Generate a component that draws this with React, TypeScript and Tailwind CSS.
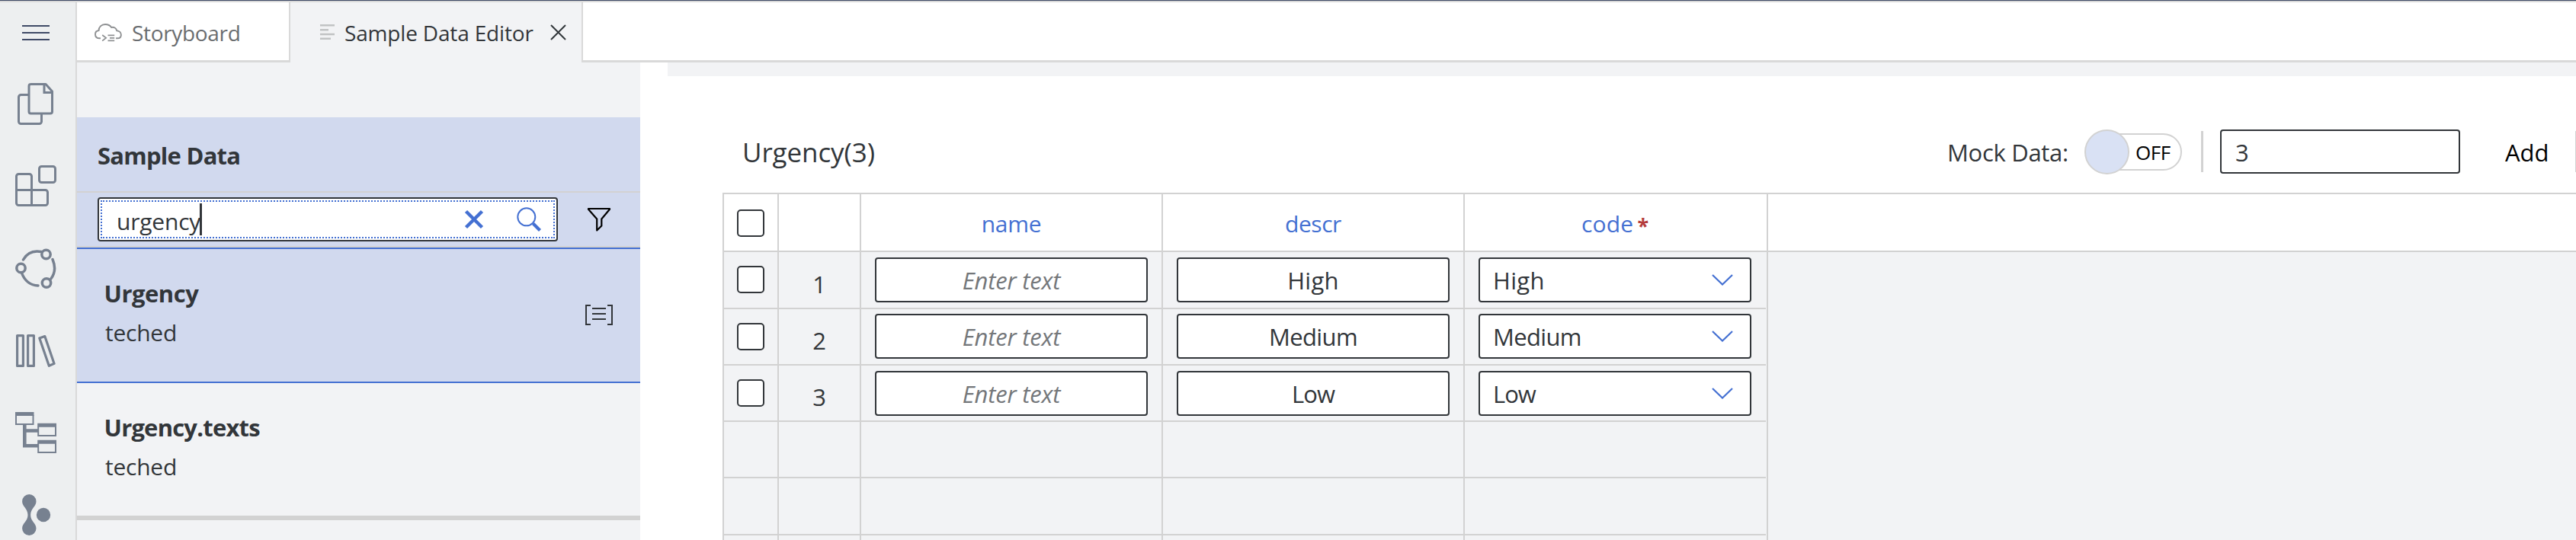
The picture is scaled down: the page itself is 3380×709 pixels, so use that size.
import type { ReactNode } from "react";

const SLATE = "#778190";
const BLUE = "#4470d2";

/* ---------- Icons ---------- */

function FilesIcon() {
  return (
    <svg width="50" height="56" viewBox="0 0 50 56" fill="none" stroke={SLATE} strokeWidth="3">
      <path d="M17.5 15.5H7.5a3 3 0 0 0-3 3v32a3 3 0 0 0 3 3h24a3 3 0 0 0 3-3V40" />
      <path d="M20 1.5h20L48.5 11v26.500a2.500 2.500 0 0 1-2.500 2.500H20.500a2.500 2.500 0 0 1-2.500-2.500V4a2.500 2.500 0 0 1 2.500-2.500" strokeLinejoin="round" />
      <path d="M38 2v10.500h10.500" />
    </svg>
  );
}

function BlocksIcon() {
  return (
    <svg width="54" height="54" viewBox="0 0 54 54" fill="none" stroke={SLATE} strokeWidth="3">
      <rect x="31.500" y="1.500" width="21" height="21" rx="3" />
      <path d="M4.500 11.500h14a3 3 0 0 1 3 3v18h18a3 3 0 0 1 3 3v14a3 3 0 0 1-3 3h-35a3 3 0 0 1-3-3v-35a3 3 0 0 1 3-3z" />
      <path d="M1.500 32.500h20v20" />
    </svg>
  );
}

function CycleIcon() {
  return (
    <svg width="54" height="54" viewBox="0 0 54 54" fill="none" stroke={SLATE} strokeWidth="3.500" strokeLinecap="round">
      <circle cx="40.500" cy="8" r="5.700" />
      <circle cx="7.500" cy="26" r="5.700" />
      <circle cx="41" cy="45.500" r="5.700" />
      <path d="M10.500 15C15 7 23 2.500 34 4.500" />
      <path d="M49 14.500c4 9.500 3.500 18.500-2.500 26" />
      <path d="M8.500 32.500C12.500 43 20 48.500 30 49" />
    </svg>
  );
}

function BooksIcon() {
  return (
    <svg width="54" height="44" viewBox="0 0 54 44" fill="none" stroke={SLATE} strokeWidth="3.200" strokeLinejoin="round">
      <rect x="3.600" y="1.600" width="7.800" height="39.800" />
      <rect x="17.600" y="1.600" width="7.800" height="39.800" />
      <path d="M32.800 5l7-2.400 12.300 35.800-6.800 2.900z" />
    </svg>
  );
}

function TreeIcon() {
  return (
    <svg width="54" height="54" viewBox="0 0 54 54" fill="none" stroke={SLATE} strokeWidth="2">
      <path d="M1 4v12h22.500V4M30.200 19v12H53V19M30.200 41v12H53V41" />
      <path d="M0 2.500h24.500M29.200 17.300H54M29.200 39.300H54" strokeWidth="5" />
      <path d="M12.300 16v28.200H30M12.300 24.500H30" strokeWidth="4.600" />
    </svg>
  );
}

function BranchIcon() {
  return (
    <svg width="38" height="54" viewBox="0 0 38 54" fill={SLATE}>
      <path d="M9.300 0a9.200 9.200 0 0 1 9.200 9.200c0 7-7.400 9.300-7.400 17.800s7.400 10.800 7.400 17.800a9.200 9.200 0 0 1-18.400 0c0-7 7.400-9.300 7.400-17.800S.1 16.200.1 9.200A9.200 9.200 0 0 1 9.300 0z" />
      <circle cx="28" cy="27" r="9.200" />
    </svg>
  );
}

function CloudIcon() {
  return (
    <svg width="36" height="24" viewBox="0 0 36 24" fill="none" stroke="#8f9193" strokeWidth="1.900">
      <path d="M8 19.300H6C3 19 1 17 1 14c0-2.800 1.700-4.600 4.600-5C5.500 4.500 9 1 14 1c4 0 6.500 1.300 8.200 4 3.300-.8 6.300.7 7 4.200 3.300.3 5.700 2.500 5.700 5.500 0 2.800-2 4.600-4.800 4.600h-2" />
      <path d="M10.200 15l5 3.800-5 3.800M17.500 15.300h8.700M20 18.800h6.200M17.500 22.300h8.700" strokeWidth="1.700" />
    </svg>
  );
}

function Chevron() {
  return (
    <svg width="28" height="15" viewBox="0 0 28 15" fill="none" stroke={BLUE} strokeWidth="2.200">
      <path d="M1 1l13 12.500L27 1" />
    </svg>
  );
}

/* ---------- Data table ---------- */

function Checkbox() {
  return <div className="size-9 shrink-0 rounded-[5px] border-2 border-[#32363a] bg-white" />;
}

function Field({ children, className = "" }: { children?: ReactNode; className?: string }) {
  return (
    <div className={`flex h-[59px] w-[358px] items-center rounded-[4px] border-2 border-[#32363a] bg-white leading-[60px] ${className}`}>
      {children}
    </div>
  );
}

type Row = {
  index: number;
  label: string;
  height: string;
  fieldPad: string;
  tracking: string;
  digit: string;
};

const rows: Row[] = [
  { index: 1, label: "High", height: "h-[75px]", fieldPad: "pt-[7px]", tracking: "tracking-[0.3px]", digit: "leading-[84px]" },
  { index: 2, label: "Medium", height: "h-[74px]", fieldPad: "pt-[6px]", tracking: "tracking-[-0.65px]", digit: "leading-[82px]" },
  { index: 3, label: "Low", height: "h-[74px]", fieldPad: "pt-[7px]", tracking: "tracking-[-1px]", digit: "leading-[82px]" },
];

function DataRow({ row }: { row: Row }) {
  return (
    <div className={`flex shrink-0 border-b-2 border-[#d2d2d2] ${row.height}`}>
      <div className="w-[72px] border-r-2 border-[#d2d2d2] pt-[18px] pl-[17px]">
        <Checkbox />
      </div>
      <div className={`w-[108px] border-r-2 border-[#d2d2d2] text-center ${row.digit}`}>{row.index}</div>
      <div className={`w-[396px] border-r-2 border-[#d2d2d2] pl-[18px] ${row.fieldPad}`}>
        <Field className="justify-center tracking-[-0.2px] text-[#74777a] italic">Enter text</Field>
      </div>
      <div className={`w-[396px] border-r-2 border-[#d2d2d2] pl-[18px] ${row.fieldPad}`}>
        <Field className={`justify-center ${row.tracking}`}>{row.label}</Field>
      </div>
      <div className={`w-[395px] pl-[18px] ${row.fieldPad}`}>
        <Field className={`justify-between pr-[22px] pl-[17px] ${row.tracking}`}>
          {row.label}
          <Chevron />
        </Field>
      </div>
    </div>
  );
}

function EmptyRow({ className }: { className: string }) {
  return (
    <div className={`flex shrink-0 border-b-2 border-[#d2d2d2] ${className}`}>
      <div className="w-[72px] border-r-2 border-[#d2d2d2]" />
      <div className="w-[108px] border-r-2 border-[#d2d2d2]" />
      <div className="w-[396px] border-r-2 border-[#d2d2d2]" />
      <div className="w-[396px] border-r-2 border-[#d2d2d2]" />
    </div>
  );
}

/* ---------- Panels ---------- */

function Sidebar() {
  return (
    <nav className="flex w-[101px] shrink-0 flex-col border-r-2 border-[#d9d9d9] bg-[#edeff0]">
      <div className="mt-[30px] ml-[29px] flex flex-col gap-[7px]">
        <span className="h-0.5 w-9 bg-[#3f4a66]" />
        <span className="h-0.5 w-9 bg-[#3f4a66]" />
        <span className="h-0.5 w-9 bg-[#3f4a66]" />
      </div>
      <div className="mt-[56px] ml-[20px]"><FilesIcon /></div>
      <div className="mt-[52px] ml-[20px]"><BlocksIcon /></div>
      <div className="mt-[55px] ml-[20px]"><CycleIcon /></div>
      <div className="mt-[59px] ml-[19px]"><BooksIcon /></div>
      <div className="mt-[58px] ml-[20px]"><TreeIcon /></div>
      <div className="mt-[54px] ml-[29px]"><BranchIcon /></div>
    </nav>
  );
}

function DataList() {
  return (
    <aside className="flex w-[739px] shrink-0 flex-col bg-[#f2f3f5] pt-[72px]">
      <h2 className="h-[99px] shrink-0 border-b-2 border-[#d2d2d2] bg-[#d1d9ee] pl-[27px] text-[31px] leading-[100px] font-bold tracking-[-0.75px]">
        Sample Data
      </h2>
      <div className="flex h-[72px] shrink-0 items-start border-b-2 border-[#d2d2d2] bg-[#d1d9ee] pt-[6px] pl-[27px]">
        <div className="h-[58px] w-[604px] rounded-[4px] border-2 border-[#32363a] bg-white p-0.5">
          <div className="flex h-[50px] w-[596px] items-center border-2 border-dotted border-[#4470d2] pl-[19px]">
            <span className="pt-[5px] text-[30px] leading-[52px] tracking-[-0.2px]">urgency</span>
            <span className="-ml-px h-[42px] w-[3px] bg-[#32363a]" />
            <svg className="ml-auto" width="26" height="26" viewBox="0 0 26 26" stroke={BLUE} strokeWidth="4.500">
              <path d="M2.500 2.500l21 21M23.500 2.500l-21 21" />
            </svg>
            <svg className="mr-[16px] ml-[43px]" width="32" height="32" viewBox="0 0 32 32" fill="none" stroke={BLUE} strokeWidth="2">
              <circle cx="12.800" cy="12.800" r="11.500" />
              <path d="M21.500 21.500l9 9" strokeWidth="4.200" />
            </svg>
          </div>
        </div>
        <svg className="mt-[13px] ml-[38px]" width="32" height="33" viewBox="0 0 32 33" fill="none" stroke="#000" strokeWidth="2.200" strokeLinejoin="round">
          <path d="M2 2h28v.800L19.300 15.500v9L13.200 30.500v-15L2 2.800z" />
        </svg>
      </div>
      <div className="flex h-[178px] shrink-0 justify-between border-y-2 border-[#4470d2] bg-[#d1d9ee] pl-[35px]">
        <div className="pt-[32px]">
          <div className="pl-[0.500px] text-[31px] leading-[52px] font-bold tracking-[-0.5px]">Urgency</div>
          <div className="pl-[2px] text-[30px] leading-[52px] tracking-[-0.25px]">teched</div>
        </div>
        <svg className="mt-[73px] mr-[35px]" width="38" height="28" viewBox="0 0 38 28" fill="none" stroke="#32363a" strokeWidth="2">
          <path d="M8 1H2v25h6M30 1h6v25h-6M10 5h18M10 12h18M10 19h18" />
        </svg>
      </div>
      <div className="h-[180px] shrink-0 border-b-[6px] border-[#d2d2d2] pt-[32px] pl-[35px]">
        <div className="pl-[0.500px] text-[31px] leading-[52px] font-bold tracking-[-0.8px]">Urgency.texts</div>
        <div className="pl-[2px] text-[30px] leading-[52px] tracking-[-0.25px]">teched</div>
      </div>
    </aside>
  );
}

function Toolbar() {
  return (
    <div className="flex h-[154px] shrink-0 items-start pt-[71px] pl-[134px]">
      <h1 className="text-[35px] leading-[60px] tracking-[-0.1px]">Urgency(3)</h1>
      <div className="ml-auto flex h-[58px] items-center">
        <span className="w-[180px] pt-[2px] text-[31px] leading-[60px] tracking-[-0.3px] whitespace-nowrap">Mock Data:</span>
        <div className="flex h-[58px] w-[128px] items-center">
          <div className="z-10 size-[59px] shrink-0 rounded-full border-2 border-[#d2d2d2] bg-[#d9e1f4]" />
          <div className="-ml-[40px] flex h-[49px] w-[109px] items-center rounded-r-full border-2 border-[#d2d2d2] bg-white pt-[2px] pl-[46px] text-[26px] leading-[50px] tracking-[-0.5px] text-black">
            OFF
          </div>
        </div>
        <div className="ml-[25px] h-[54px] w-[3px] bg-[#d2d2d2]" />
        <div className="ml-[22px] flex h-[58px] w-[315px] items-center rounded-[4px] border-2 border-[#32363a] pt-[2px] pl-[18px] text-[31px] leading-[60px]">3</div>
        <span className="ml-[59px] w-[92px] pt-[2px] text-[31px] leading-[60px] text-black">Add</span>
        <div className="h-[54px] w-px bg-[#d2d2d2]" />
      </div>
    </div>
  );
}

export default function App() {
  return (
    <div className="flex h-[709px] w-[3380px] flex-col overflow-hidden border-t border-[#3f4a66] bg-white font-['Open_Sans',sans-serif] text-[31px] text-[#32363a]">
      <div className="h-0.5 shrink-0 bg-[#d9d9d9]" />
      <div className="flex min-h-0 flex-1">
        <Sidebar />
        <div className="flex min-w-0 flex-1 flex-col">
          <header className="flex h-[79px] shrink-0 text-[28px] leading-[74px]">
            <div className="flex w-[280px] border-r-2 border-b-[3px] border-[#d9d9d9] bg-white pl-[23px] text-[#6a6d70]">
              <div className="pt-[28px]"><CloudIcon /></div>
              <span className="pt-[3px] pl-[13px] tracking-[-0.33px]">Storyboard</span>
            </div>
            <div className="flex w-[382px] bg-[#f2f3f5] pl-[39px]">
              <svg className="mt-[29px]" width="19" height="21" viewBox="0 0 19 21" stroke="#c1c3c4" strokeWidth="2.600">
                <path d="M0 1.300h19M0 7.300h11M0 13h19M0 18.700h14" />
              </svg>
              <span className="w-[283px] pt-[3px] pl-[13px] tracking-[-0.17px] whitespace-nowrap">Sample Data Editor</span>
              <svg className="mt-[29px]" width="21" height="21" viewBox="0 0 21 21" stroke="#32363a" strokeWidth="2">
                <path d="M1 1l19 19M20 1L1 20" />
              </svg>
            </div>
            <div className="flex-1 border-b-[3px] border-l-2 border-[#d9d9d9] bg-white" />
          </header>
          <div className="flex min-h-0 flex-1">
            <DataList />
            <main className="flex min-w-0 flex-1 flex-col">
              <div className="ml-[36px] h-[18px] shrink-0 bg-[#f2f3f5]" />
              <div className="-mt-px"><Toolbar /></div>
              <section className="ml-[108px] flex min-h-0 flex-1 flex-col">
                <div className="flex h-[78px] shrink-0 border-y-2 border-l-2 border-[#d2d2d2] text-[30px] leading-[77px] text-[#4470d2]">
                  <div className="w-[72px] border-r-2 border-[#d2d2d2] pt-[20px] pl-[17px]">
                    <Checkbox />
                  </div>
                  <div className="w-[108px] border-r-2 border-[#d2d2d2]" />
                  <div className="w-[396px] border-r-2 border-[#d2d2d2] text-center tracking-[-0.3px]">name</div>
                  <div className="w-[396px] border-r-2 border-[#d2d2d2] text-center tracking-[-0.45px]">descr</div>
                  <div className="flex w-[398px] border-r-2 border-[#d2d2d2] pl-[153px]">
                    <span className="tracking-[0.2px]">code</span>
                    <span className="ml-[5px] text-[27px] leading-[81px] font-bold text-[#b43c3c]">*</span>
                  </div>
                </div>
                <div className="flex min-h-0 flex-1 bg-[#f2f3f5]">
                  <div className="flex w-[1372px] flex-col overflow-hidden border-x-2 border-[#d2d2d2] pr-px">
                    {rows.map((row) => (
                      <DataRow key={row.index} row={row} />
                    ))}
                    <EmptyRow className="h-[74px]" />
                    <EmptyRow className="h-[75px]" />
                    <EmptyRow className="h-[74px]" />
                  </div>
                </div>
              </section>
            </main>
          </div>
        </div>
      </div>
    </div>
  );
}
